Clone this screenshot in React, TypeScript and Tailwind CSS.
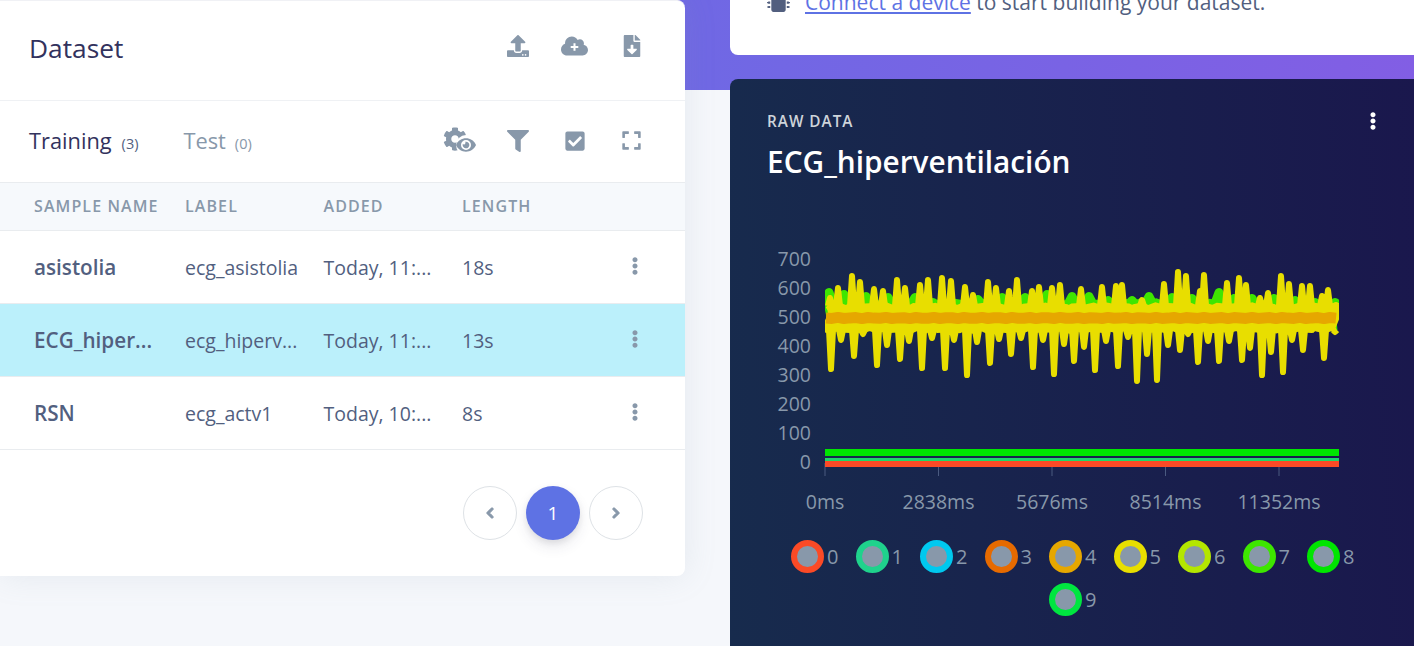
import { FaCheckSquare, FaChevronLeft, FaChevronRight, FaCog, FaEllipsisV, FaExpand, FaEye, FaFileDownload, FaFilter, FaMicrochip, FaUpload } from 'react-icons/fa';

const FONT = "font-['Open_Sans',sans-serif]";

const ROWS = [
  { name: 'asistolia', label: 'ecg_asistolia', added: 'Today, 11:...', length: '18s', active: false },
  { name: 'ECG_hiper...', label: 'ecg_hiperv...', added: 'Today, 11:...', length: '13s', active: true },
  { name: 'RSN', label: 'ecg_actv1', added: 'Today, 10:...', length: '8s', active: false },
];

const LEGEND = [
  { id: 0, ring: 'border-[#fb4a26]' },
  { id: 1, ring: 'border-[#1fd28c]' },
  { id: 2, ring: 'border-[#00c8ef]' },
  { id: 3, ring: 'border-[#e66a00]' },
  { id: 4, ring: 'border-[#e6a700]' },
  { id: 5, ring: 'border-[#e8de00]' },
  { id: 6, ring: 'border-[#b4e600]' },
  { id: 7, ring: 'border-[#3ee600]' },
  { id: 8, ring: 'border-[#00e600]' },
  { id: 9, ring: 'border-[#00e640]' },
];

// peak and valley tips of the yellow trace, read off the reference
const YELLOW: [number, number][] = [
  [830, 295], [831, 372], [838, 285], [841, 343], [852, 273], [854, 359], [860, 279], [863, 337],
  [874, 286], [877, 368], [883, 288], [887, 348], [897, 277], [900, 362], [905, 285], [909, 344], [920, 282],
  [922, 371], [928, 277], [932, 341], [942, 275], [945, 371], [951, 278], [954, 343], [965, 284], [967, 378],
  [973, 292], [977, 345], [988, 279], [990, 366], [996, 285], [999, 342], [1009, 288], [1011, 357], [1017, 277],
  [1021, 341], [1032, 288], [1033, 370], [1039, 284], [1043, 343], [1052, 285], [1054, 377], [1060, 282],
  [1064, 347], [1074, 364], [1081, 286], [1084, 350], [1095, 373], [1102, 284],
  [1106, 344], [1116, 283], [1118, 369], [1122, 282], [1128, 340], [1137, 384], [1142, 297],
  [1147, 357], [1157, 383], [1164, 281], [1168, 348], [1178, 269], [1180, 353], [1186, 273],
  [1188, 337], [1198, 365], [1200, 288], [1204, 272], [1208, 344], [1219, 364], [1227, 280], [1229, 344],
  [1239, 275], [1242, 363], [1246, 282], [1250, 351], [1260, 295], [1262, 378], [1268, 290], [1271, 355],
  [1281, 273], [1283, 375], [1289, 281], [1292, 343], [1302, 283], [1303, 353], [1310, 283], [1313, 332],
  [1322, 293], [1324, 361], [1328, 287], [1335, 335], [1336, 302],
];

const LIME: [number, number][] = [
  [829, 288], [844, 290], [866, 292], [888, 293], [915, 293], [933, 298], [958, 300], [978, 295], [1002, 293],
  [1025, 293], [1047, 290], [1072, 292], [1089, 292], [1108, 296], [1132, 296], [1149, 292], [1172, 293],
  [1192, 294], [1219, 288], [1234, 294], [1252, 294], [1274, 294], [1295, 296], [1315, 298], [1335, 298],
];

const BASE_Y = 318;

// one narrow wedge per tip, the joins are round so the tip sits half a stroke inward
const wedges = (tips: [number, number][], width: number, spread: number) =>
  tips
    .map(([x, y]) => {
      const tip = y < BASE_Y ? y + width / 2 : y - width / 2;
      const foot = y < BASE_Y ? BASE_Y - 12 : BASE_Y + 12;
      return `M${x - spread} ${foot}L${x} ${tip}L${x + spread} ${foot}`;
    })
    .join('');

const noisyLine = (y: number, amp: number, step: number) => {
  const pts: string[] = [];
  for (let x = 826; x <= 1339; x += step) {
    pts.push(`${x},${(y + amp * Math.sin(x * 1.7)).toFixed(1)}`);
  }
  return pts.join(' ');
};

function EcgChart() {
  return (
    <svg viewBox="767 240 610 285" className="mt-[60px] block h-[285px] w-[610px]">
      <defs>
        <clipPath id="plot">
          <rect x={825} y={250} width={514} height={230} />
        </clipPath>
      </defs>
      {[700, 600, 500, 400, 300, 200, 100, 0].map((v, i) => (
        <text key={v} x={811} y={258 + i * 29} textAnchor="end" dominantBaseline="central" fontSize={19.5} fill="#8898aa" fontFamily="Open Sans">
          {v}
        </text>
      ))}
      {[825, 938.5, 1052, 1165.5, 1279].map((x) => (
        <line key={x} x1={x} x2={x} y1={463} y2={476} stroke="#4a5a80" strokeWidth={1} />
      ))}
      {['0ms', '2838ms', '5676ms', '8514ms', '11352ms'].map((t, i) => (
        <text key={t} x={825 + i * 113.5} y={501} textAnchor="middle" dominantBaseline="central" fontSize={19.5} fill="#8898aa" fontFamily="Open Sans">
          {t}
        </text>
      ))}
      <g clipPath="url(#plot)">
        <polyline points={noisyLine(315, 1, 5)} fill="none" stroke="#3ee600" strokeWidth={30} />
        <path d={wedges(LIME, 9, 5)} fill="none" stroke="#3ee600" strokeWidth={9} strokeLinejoin="round" />
        <polyline points={noisyLine(318, 1.5, 3)} fill="none" stroke="#e8de00" strokeWidth={27} />
        <path d={wedges(YELLOW, 6, 2)} fill="none" stroke="#e8de00" strokeWidth={6} strokeLinejoin="round" />
        <polyline points={noisyLine(318, 0.6, 6)} fill="none" stroke="#e6a700" strokeWidth={11} strokeLinejoin="round" />
      </g>
      <line x1={825} x2={1339} y1={452.5} y2={452.5} stroke="#00e600" strokeWidth={7} />
      <line x1={825} x2={1339} y1={459.5} y2={459.5} stroke="#1ed76a" strokeWidth={3} />
      <line x1={825} x2={1339} y1={464} y2={464} stroke="#fb4a26" strokeWidth={6} />
    </svg>
  );
}

function CloudPlus() {
  return (
    <svg viewBox="0 0 640 512" className="h-[22px] w-[27px]">
      <path
        fill="#8898aa"
        d="M537.6 226.6c4.1-10.7 6.4-22.4 6.4-34.6 0-53-43-96-96-96-19.7 0-38.1 6-53.3 16.2C367 64.2 315.3 32 256 32c-88.4 0-160 71.6-160 160 0 2.7.1 5.4.2 8.1C40.2 219.8 0 273.2 0 336c0 79.5 64.5 144 144 144h368c70.7 0 128-57.3 128-128 0-61.9-44-113.6-102.4-125.4z"
      />
      <path fill="#fff" d="M296 190h48v66h66v48h-66v66h-48v-66h-66v-48h66z" />
    </svg>
  );
}

function IconSlot({ children }: { children: React.ReactNode }) {
  return <div className="flex w-[57px] items-center justify-center text-[#8898aa]">{children}</div>;
}

export default function App() {
  return (
    <div className={`${FONT} flex h-[646px] w-[1414px] gap-[45px] overflow-hidden bg-[#f5f7fb] bg-[linear-gradient(87deg,#5e72e4,#825ee4)] bg-[length:100%_90px] bg-no-repeat`}>
      {/* Dataset card */}
      <div className="h-[576px] w-[685px] shrink-0 rounded-r-lg border-t border-[#f0f1f5] bg-white shadow-[0_0_32px_rgba(136,152,170,0.15)]">
        <div className="flex h-[100px] items-center justify-between border-b border-[#eff1f4] pr-[25px] pb-[4px] pl-[29px]">
          <h2 className="text-[26.3px] font-medium text-[#32325d]">Dataset</h2>
          <div className="-mt-[6px] flex">
            <IconSlot><FaUpload size={22} /></IconSlot>
            <IconSlot><CloudPlus /></IconSlot>
            <IconSlot><FaFileDownload size={22} /></IconSlot>
          </div>
        </div>

        <div className="flex h-[81px] items-center justify-between pr-[25px] pl-[29px]">
          <div className="flex items-baseline">
            <span className="text-[21.8px] font-medium text-[#32325d]">Training</span>
            <span className="ml-[10px] text-[14.5px] text-[#525f7f]">(3)</span>
            <span className="ml-[45px] text-[21.8px] font-medium text-[#8898aa]">Test</span>
            <span className="ml-[9px] text-[14.5px] text-[#8898aa]">(0)</span>
          </div>
          <div className="-mt-[2px] flex">
            <IconSlot>
              <div className="relative mr-[2px] h-[28px] w-[33px]">
                <FaCog size={24} />
                <FaEye size={20} className="absolute right-0 bottom-0 rounded-full bg-white" />
              </div>
            </IconSlot>
            <IconSlot><FaFilter size={22} /></IconSlot>
            <IconSlot><FaCheckSquare size={22} /></IconSlot>
            <IconSlot><FaExpand size={21} /></IconSlot>
          </div>
        </div>

        <div className="grid h-[49px] grid-cols-[185px_138.5px_138.5px_1fr] items-center border-y border-[#e9ecef] bg-[#f6f9fc] pb-[2px] text-[16px] font-semibold tracking-[1.1px] text-[#8898aa] uppercase">
          <span className="pl-[34px]">Sample name</span>
          <span>Label</span>
          <span>Added</span>
          <span>Length</span>
        </div>

        {ROWS.map((row) => (
          <div
            key={row.name}
            className={`grid h-[73px] grid-cols-[185px_138.5px_138.5px_1fr_59px] items-center border-b border-[#e9ecef] pt-[1px] text-[19.5px] text-[#525f7f] ${row.active ? 'bg-[#bbf0fb]' : 'bg-white'}`}
          >
            <span className="pl-[34px] text-[20.7px] font-semibold">{row.name}</span>
            <span>{row.label}</span>
            <span>{row.added}</span>
            <span>{row.length}</span>
            <FaEllipsisV size={18} className="-mt-[3px] text-[#8898aa]" />
          </div>
        ))}

        <div className="flex justify-end gap-[9px] pt-[36px] pr-[42px]">
          <button className="flex h-[54px] w-[54px] items-center justify-center rounded-full border border-[#dee2e6] bg-white text-[#8898aa]">
            <FaChevronLeft size={12} stroke="currentColor" strokeWidth={50} />
          </button>
          <button className="flex h-[54px] w-[54px] items-center justify-center rounded-full bg-[#5e72e4] text-[19px] text-white shadow-[0_7px_14px_rgba(50,50,93,0.1),0_3px_6px_rgba(0,0,0,0.08)]">
            1
          </button>
          <button className="flex h-[54px] w-[54px] items-center justify-center rounded-full border border-[#dee2e6] bg-white text-[#8898aa]">
            <FaChevronRight size={12} stroke="currentColor" strokeWidth={50} />
          </button>
        </div>
      </div>

      {/* Right column */}
      <div className="flex min-w-0 flex-1 flex-col gap-[24px]">
        <div className="-mt-[10px] flex h-[65px] w-[700px] shrink-0 gap-[15px] rounded-lg bg-white pl-[37px] text-[21px] text-[#525f7f]">
          <FaMicrochip size={23} className="-mt-[1px] text-[#525f7f]" />
          <p className="leading-[24px]">
            <span className="text-[#5e72e4] underline">Connect a device</span> to start building your dataset.
          </p>
        </div>

        <div className="relative h-[600px] w-[700px] shrink-0 rounded-lg bg-[linear-gradient(87deg,#172b4d,#1a174d)] pt-[32px] pl-[37px]">
          <FaEllipsisV size={18} className="absolute top-[33px] left-[634px] text-white" />
          <p className="text-[15.3px] leading-5 font-semibold tracking-[1px] text-[#ced4da] uppercase">Raw data</p>
          <h3 className="mt-[13px] text-[29.8px] leading-9 font-semibold text-white">ECG_hiperventilación</h3>
          <EcgChart />
          <div className="mt-[15px] ml-[1px] flex w-[610px] flex-wrap justify-center gap-x-[16.5px] gap-y-[10px]">
            {LEGEND.map((item) => (
              <div key={item.id} className="flex h-[33px] w-[48px] items-center gap-[3px]">
                <span className={`h-[33px] w-[33px] shrink-0 rounded-full border-[6px] bg-[#8898aa] ${item.ring}`} />
                <span className="text-[20px] text-[#8898aa]">{item.id}</span>
              </div>
            ))}
          </div>
        </div>
      </div>
    </div>
  );
}
